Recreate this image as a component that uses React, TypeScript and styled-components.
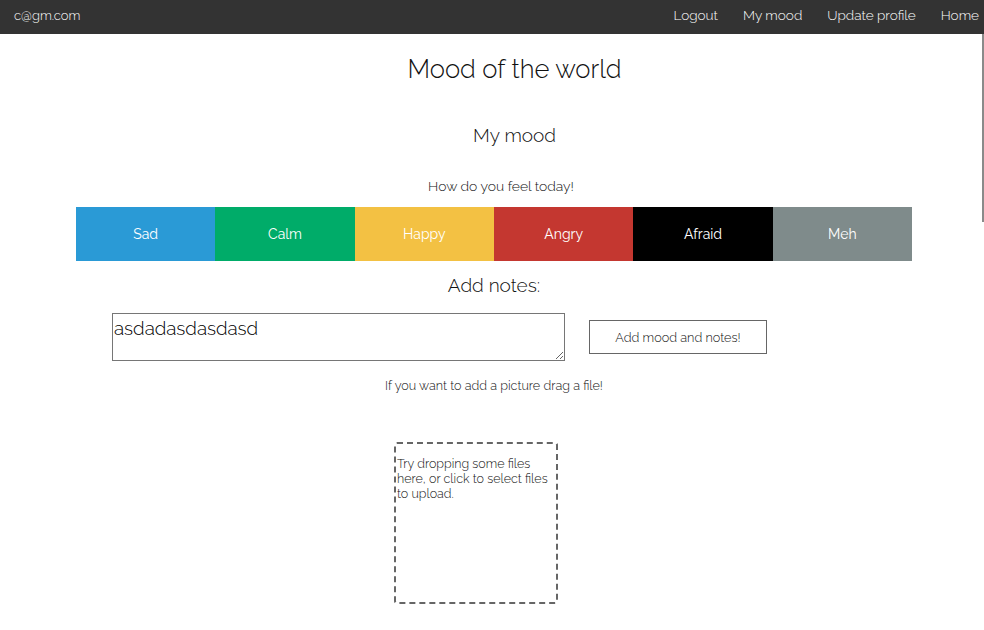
import styled, { createGlobalStyle } from "styled-components";

const GlobalStyle = createGlobalStyle`
  html, body {
    margin: 0;
    padding: 0;
    background: #ffffff;
    font-family: "Raleway", "Lato", "Open Sans", sans-serif;
    font-weight: 300;
    color: #111;
  }
`;

const Nav = styled.nav`
  height: 34px;
  box-sizing: border-box;
  padding: 0 5px 4px 14px;
  background: #333333;
  display: flex;
  align-items: center;
  justify-content: space-between;
  color: #ffffff;
  font-size: 13.6px;
`;

const Brand = styled.span`
  font-size: 13px;
`;

const NavLinks = styled.div`
  display: flex;
  gap: 25px;
`;

const NavLink = styled.a`
  color: #ffffff;
  text-decoration: none;
  cursor: pointer;
`;

const Scrollbar = styled.div`
  position: fixed;
  top: 34px;
  right: 0;
  width: 2px;
  height: 188px;
  background: #8a8a8a;
`;

const Main = styled.main`
  width: 836px;
  margin-left: 76px;
  display: flex;
  flex-direction: column;
`;

const Title = styled.h1<{ $shift: number; $size: number; $top: number }>`
  margin: ${(p) => p.$top}px 0 0;
  padding-left: ${(p) => p.$shift}px;
  text-align: center;
  font-weight: 300;
  font-size: ${(p) => p.$size}px;
  line-height: ${(p) => Math.round(p.$size * 1.2)}px;
`;

const Hint = styled.p<{ $shift: number; $top: number; $size: number }>`
  margin: ${(p) => p.$top}px 0 0;
  padding-left: ${(p) => p.$shift}px;
  text-align: center;
  font-size: ${(p) => p.$size}px;
  line-height: 16px;
`;

const MoodBar = styled.div`
  margin-top: 13px;
  display: grid;
  grid-template-columns: repeat(6, 1fr);
  height: 54px;
`;

const MoodButton = styled.button<{ $bg: string }>`
  border: none;
  background: ${(p) => p.$bg};
  color: #ffffff;
  font-family: inherit;
  font-weight: 400;
  font-size: 14px;
  cursor: pointer;
`;

const NotesRow = styled.div`
  margin-top: 16px;
  padding-left: 36px;
  display: flex;
  align-items: center;
  gap: 24px;
`;

const Notes = styled.textarea`
  width: 453px;
  height: 48px;
  box-sizing: border-box;
  border: 1px solid #767676;
  padding: 3px 1px;
  font-family: inherit;
  font-weight: 300;
  font-size: 18.8px;
  color: #000;
`;

const SubmitButton = styled.button`
  width: 178px;
  height: 34px;
  background: #ffffff;
  border: 1px solid #666;
  font-family: inherit;
  font-weight: 300;
  font-size: 12.7px;
  color: #111;
  cursor: pointer;
`;

const Dropzone = styled.div`
  margin: 48px 0 0 318px;
  width: 164px;
  height: 162px;
  box-sizing: border-box;
  border: 2px dashed #666;
  border-radius: 3px;
  padding: 12px 0 0 1px;
  font-size: 12.5px;
  line-height: 15px;
  color: #111;
`;

const moods = [
  { label: "Sad", color: "#2a9ad6" },
  { label: "Calm", color: "#00ac69" },
  { label: "Happy", color: "#f3c143" },
  { label: "Angry", color: "#c43730" },
  { label: "Afraid", color: "#000000" },
  { label: "Meh", color: "#7f8b8b" },
];

export default function App() {
  return (
    <>
      <GlobalStyle />
      <Nav>
        <Brand>c@gm.com</Brand>
        <NavLinks>
          <NavLink>Logout</NavLink>
          <NavLink>My mood</NavLink>
          <NavLink>Update profile</NavLink>
          <NavLink>Home</NavLink>
        </NavLinks>
      </Nav>
      <Scrollbar />
      <Main>
        <Title $shift={41} $size={25.6} $top={20}>
          Mood of the world
        </Title>
        <Title as="h2" $shift={41} $size={19} $top={39}>
          My mood
        </Title>
        <Hint $shift={14} $top={31} $size={13.9}>
          How do you feel today!
        </Hint>
        <MoodBar>
          {moods.map((m) => (
            <MoodButton key={m.label} $bg={m.color}>
              {m.label}
            </MoodButton>
          ))}
        </MoodBar>
        <Title as="h3" $shift={0} $size={19} $top={13}>
          Add notes:
        </Title>
        <NotesRow>
          <Notes defaultValue="asdadasdasdasd" />
          <SubmitButton>Add mood and notes!</SubmitButton>
        </NotesRow>
        <Hint $shift={0} $top={17} $size={12.6}>
          If you want to add a picture drag a file!
        </Hint>
        <Dropzone>
          Try dropping some files here, or click to select files to upload.
        </Dropzone>
      </Main>
    </>
  );
}
